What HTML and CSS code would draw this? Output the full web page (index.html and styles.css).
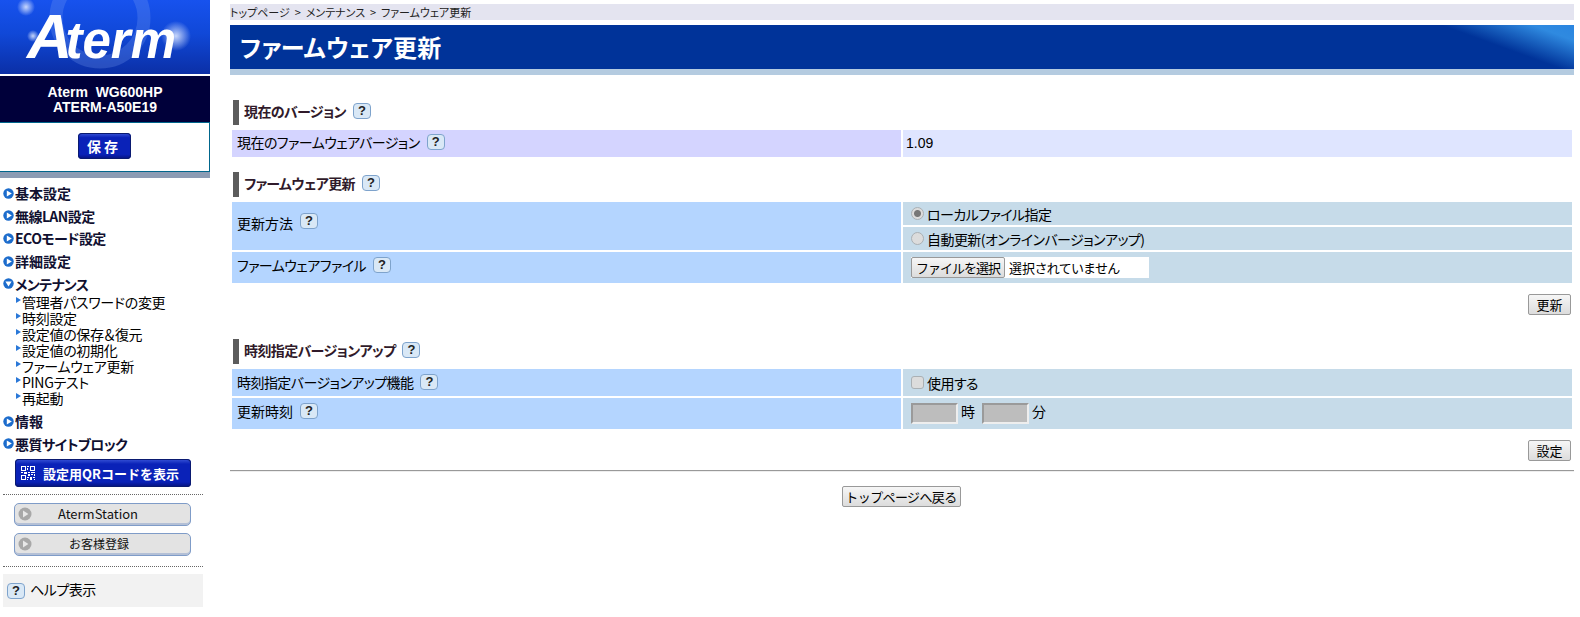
FILE: index.html
```html
<!DOCTYPE html>
<html lang="ja">
<head>
<meta charset="utf-8">
<title>ファームウェア更新</title>
<link rel="stylesheet" href="styles.css">
</head>
<body>
<svg class="sprite" width="0" height="0" aria-hidden="true">
  <symbol id="ic-right" viewBox="0 0 11 11"><circle cx="5.5" cy="5.5" r="5.2" fill="#1c6ccc"/><path d="M3.8 2.4 8.8 5.5 3.8 8.6Z" fill="#fff"/></symbol>
  <symbol id="ic-down" viewBox="0 0 11 11"><circle cx="5.5" cy="5.5" r="5.2" fill="#1c6ccc"/><path d="M2.4 3.6 8.6 3.6 5.5 8.6Z" fill="#fff"/></symbol>
  <symbol id="ic-sub" viewBox="0 0 5 6"><path d="M0 0 5 3 0 6Z" fill="#2a78d8"/></symbol>
  <symbol id="ic-grey" viewBox="0 0 14 14"><circle cx="7" cy="7" r="6.5" fill="#a8a8a8"/><path d="M5 3.6 10.4 7 5 10.4Z" fill="#e8e8e8"/></symbol>
</svg>
<div class="page">
  <aside class="side">
    <div class="logo">
      <svg class="logo-art" viewBox="0 0 210 74" aria-hidden="true">
        <defs>
          <radialGradient id="glow"><stop offset="0" stop-color="#dbe6ff" stop-opacity=".9"/><stop offset="1" stop-color="#dbe6ff" stop-opacity="0"/></radialGradient>
        </defs>
        <circle cx="100" cy="18" r="44" fill="none" stroke="#7ea4f2" stroke-opacity=".25" stroke-width="13"/>
        <circle cx="26" cy="7" r="9" fill="url(#glow)"/>
        <circle cx="33" cy="36" r="6" fill="url(#glow)"/>
        <circle cx="176" cy="36" r="15" fill="url(#glow)"/>
      </svg>
      <div class="logo-text"><span class="logo-a">A</span>term</div>
    </div>
    <div class="model"><div>Aterm&nbsp; WG600HP</div><div>ATERM-A50E19</div></div>
    <div class="save-box"><button class="btn-blue btn-save" type="button">保存</button></div>
    <div class="side-rule"></div>
    <nav class="menu">
      <a class="m1 m1-k"><svg class="ic"><use href="#ic-right"/></svg>基本設定</a>
      <a class="m1"><svg class="ic"><use href="#ic-right"/></svg>無線LAN設定</a>
      <a class="m1"><svg class="ic"><use href="#ic-right"/></svg>ECOモード設定</a>
      <a class="m1 m1-k"><svg class="ic"><use href="#ic-right"/></svg>詳細設定</a>
      <a class="m1"><svg class="ic"><use href="#ic-down"/></svg>メンテナンス</a>
      <div class="sub">
        <a class="m2"><svg class="ic-s"><use href="#ic-sub"/></svg>管理者パスワードの変更</a>
        <a class="m2"><svg class="ic-s"><use href="#ic-sub"/></svg>時刻設定</a>
        <a class="m2"><svg class="ic-s"><use href="#ic-sub"/></svg>設定値の保存＆復元</a>
        <a class="m2"><svg class="ic-s"><use href="#ic-sub"/></svg>設定値の初期化</a>
        <a class="m2"><svg class="ic-s"><use href="#ic-sub"/></svg>ファームウェア更新</a>
        <a class="m2"><svg class="ic-s"><use href="#ic-sub"/></svg>PINGテスト</a>
        <a class="m2"><svg class="ic-s"><use href="#ic-sub"/></svg>再起動</a>
      </div>
      <a class="m1 m1-k"><svg class="ic"><use href="#ic-right"/></svg>情報</a>
      <a class="m1"><svg class="ic"><use href="#ic-right"/></svg>悪質サイトブロック</a>
    </nav>
    <button class="btn-blue btn-qr" type="button">
      <svg class="qr" viewBox="0 0 14 14" aria-hidden="true"><path fill="#fff" d="M0 0h5v5H0zM1 1v3h3V1zM9 0h5v5H9zM10 1v3h3V1zM0 9h5v5H0zM1 10v3h3v-3zM6 0h2v1H6zM6 2h1v2H6zM0 6h2v1H0zM3 6h3v2H3zM7 6h2v1H7zM10 6h4v1h-4zM7 8h2v2H7zM10 8h2v1h-2zM13 8h1v2h-1zM6 11h2v1H6zM9 11h2v3H9zM12 11h2v1h-2zM13 13h1v1h-1zM6 13h1v1H6z"/></svg>
      <span>設定用QRコードを表示</span>
    </button>
    <div class="dots"></div>
    <button class="btn-grey" type="button"><svg class="ic-g"><use href="#ic-grey"/></svg><span>AtermStation</span></button>
    <button class="btn-grey btn-grey-jp" type="button"><svg class="ic-g"><use href="#ic-grey"/></svg><span>お客様登録</span></button>
    <div class="dots dots-2"></div>
    <div class="help-box"><span class="q">?</span>ヘルプ表示</div>
  </aside>

  <main class="main">
    <div class="crumb">トップページ &nbsp;&gt;&nbsp; メンテナンス &nbsp;&gt;&nbsp; ファームウェア更新</div>
    <h1 class="title">ファームウェア更新</h1>

    <section class="sec sec-1">
      <h2 class="head">現在のバージョン<span class="q">?</span></h2>
      <div class="row row-v">
        <div class="lc lc-v">現在のファームウェアバージョン<span class="q">?</span></div>
        <div class="rc rc-v">1.09</div>
      </div>
    </section>

    <section class="sec sec-2">
      <h2 class="head">ファームウェア更新<span class="q">?</span></h2>
      <div class="row">
        <div class="lc lc-tall lc-k">更新方法<span class="q">?</span></div>
        <div class="rstack">
          <label class="rc rc-s"><input type="radio" name="m" checked disabled>ローカルファイル指定</label>
          <label class="rc rc-s"><input type="radio" name="m" disabled>自動更新(オンラインバージョンアップ)</label>
        </div>
      </div>
      <div class="row">
        <div class="lc">ファームウェアファイル<span class="q">?</span></div>
        <div class="rc"><div class="file"><button class="btn btn-file" type="button">ファイルを選択</button><span class="file-t">選択されていません</span></div></div>
      </div>
      <div class="actions"><button class="btn btn-sm" type="button">更新</button></div>
    </section>

    <section class="sec sec-3">
      <h2 class="head">時刻指定バージョンアップ<span class="q">?</span></h2>
      <div class="row row-h27">
        <div class="lc">時刻指定バージョンアップ機能<span class="q">?</span></div>
        <label class="rc"><input type="checkbox" disabled>使用する</label>
      </div>
      <div class="row">
        <div class="lc lc-k">更新時刻<span class="q">?</span></div>
        <div class="rc"><span class="tbox"></span><span class="unit">時</span><span class="tbox"></span><span class="unit">分</span></div>
      </div>
      <div class="actions"><button class="btn btn-sm" type="button">設定</button></div>
    </section>

    <hr class="rule">
    <div class="back"><button class="btn btn-back" type="button">トップページへ戻る</button></div>
  </main>
</div>
</body>
</html>
```

FILE: styles.css
```css
* { box-sizing: border-box; }
html, body { margin: 0; padding: 0; background: #fff; }
body {
  font-family: "Noto Sans CJK JP", "Liberation Sans", sans-serif;
  font-size: 14px;
  color: #000;
  font-feature-settings: "palt";
  height: 617px;
  overflow: hidden;
}
.sprite { position: absolute; }
.page { display: flex; align-items: flex-start; }

/* sidebar */
.side { width: 210px; flex: none; }
.logo {
  position: relative;
  height: 74px;
  overflow: hidden;
  background: linear-gradient(#1752ee 0%, #1048d8 45%, #0b2fa6 100%);
}
.logo-art { position: absolute; inset: 0; width: 210px; height: 74px; }
.logo-text {
  position: absolute;
  left: 27px;
  top: 1px;
  font: italic bold 51px/70px "Liberation Sans", sans-serif;
  color: #fff;
  white-space: nowrap;
}
.logo-a { font-size: 63px; letter-spacing: -7px; }
.model {
  margin-top: 2px;
  height: 46px;
  padding-top: 9px;
  background: #00003a;
  color: #fff;
  text-align: center;
  font: bold 14px/15px "Liberation Sans", sans-serif;
}
.save-box {
  height: 50px;
  border: solid #00668c;
  border-width: 1px 1px 1px 0;
  display: flex;
  align-items: center;
  justify-content: center;
  padding: 0 1px 2px 0;
}
.btn-blue {
  border: 0;
  color: #fff;
  font-family: inherit;
  font-weight: bold;
  border-radius: 4px;
  background: linear-gradient(#3a55d8 0, #0a22b8 18%, #0a22b8 82%, #06127a 100%);
  box-shadow: 0 0 0 1px #0a1a70 inset;
}
.btn-save { width: 53px; height: 26px; font-size: 14px; letter-spacing: 3px; padding: 0; }
.side-rule { height: 6px; background: #8c9cb4; }
.menu { display: flex; flex-direction: column; padding-top: 4px; }
.m1 {
  display: flex;
  align-items: center;
  height: 22.6px;
  padding-left: 3px;
  font-weight: bold;
  font-size: 14px;
  letter-spacing: -.55px;
  color: #101030;
}
.m1-k { letter-spacing: 0; }
.ic { width: 11px; height: 11px; margin-right: 1px; flex: none; }
.sub { display: flex; flex-direction: column; margin-top: -1px; padding-bottom: 4px; }
.m2 { display: flex; align-items: center; height: 16px; padding-left: 16px; font-size: 14px; line-height: 16px; letter-spacing: -.3px; }
.ic-s { width: 5px; height: 6px; margin-right: 1px; margin-top: -3px; flex: none; }
.btn-qr {
  display: flex;
  align-items: center;
  margin: 4px 0 0 15px;
  width: 176px;
  height: 28px;
  padding: 0 0 0 6px;
  font-size: 13px;
}
.qr { width: 14px; height: 14px; margin-right: 8px; flex: none; }
.dots { margin: 7px 7px 8px 3px; border-top: 1px dotted #666; }
.dots-2 { margin-top: 10px; margin-bottom: 7px; }
.btn-grey {
  display: flex;
  align-items: center;
  width: 177px;
  height: 23px;
  margin: 0 0 7px 14px;
  padding: 0 0 2px 3px;
  border: 1px solid #7f9cc8;
  border-radius: 5px;
  background: #e3e3e3;
  box-shadow: 0 -2px 0 #b4c0d6 inset;
  font: 13px "Noto Sans CJK JP", sans-serif;
  color: #111;
}
.btn-grey span { flex: 1; text-align: center; padding-right: 26px; }
.btn-grey-jp span { font-size: 12px; padding-right: 24px; }
.ic-g { width: 14px; height: 14px; flex: none; }
.help-box {
  display: flex;
  align-items: center;
  height: 33px;
  margin: 0 7px 0 3px;
  padding: 0 0 3px 4px;
  background: #f2f2f2;
  letter-spacing: -.5px;
}
.help-box .q { margin: 3px 5px 0 0; }

/* help badge */
.q {
  display: inline-block;
  flex: none;
  width: 18px;
  height: 16px;
  margin-left: 7px;
  border: 1px solid #7ea3cc;
  border-radius: 4px;
  background: #d9e8f6;
  color: #222;
  font: bold 13px/14px "Liberation Sans", sans-serif;
  letter-spacing: 0;
  text-align: center;
  vertical-align: middle;
}

/* main column */
.main { width: 1344px; margin-left: 20px; padding-top: 4px; }
.crumb {
  height: 16px;
  background: #e4e4f0;
  font-size: 11px;
  line-height: 16px;
  color: #222;
  white-space: nowrap;
}
.title {
  margin: 5px 0 0;
  height: 50px;
  padding-left: 10px;
  border-bottom: 6px solid #b4cbe0;
  background:
    linear-gradient(20deg, #003399 50%, #2f8ae0 84%, #2a85e0 100%) no-repeat right top / 145px 44px,
    #003399;
  color: #fff;
  font-size: 24px;
  letter-spacing: .2px;
  line-height: 44px;
  font-weight: bold;
}
.sec { padding-left: 2px; padding-right: 2px; }
.sec-1 { margin-top: 25px; }
.sec-2 { margin-top: 15px; }
.sec-3 { margin-top: 24px; }
.head {
  display: flex;
  align-items: center;
  height: 25px;
  margin: 0 0 5px 1px;
  padding: 0 0 3px 5px;
  border-left: 6px solid #5c5c5c;
  font-size: 14px;
  font-weight: bold;
  letter-spacing: -.6px;
  color: #301a2a;
}
.row { display: grid; grid-template-columns: 669px 669px; column-gap: 2px; margin-bottom: 2px; }
.row-v { margin-bottom: 0; }
.lc, .rc { display: flex; align-items: center; min-height: 27px; letter-spacing: -.55px; }
.lc { background: #b4d5ff; padding-left: 5px; padding-bottom: 6px; min-height: 31px; }
.lc-k { letter-spacing: 0; }
.row-h27 .lc { min-height: 27px; padding-bottom: 2px; }
.row-h27 .rc { min-height: 27px; }
.lc-v { background: #d4d4ff; padding-bottom: 3px; min-height: 27px; }
.lc-tall { align-items: flex-start; padding-top: 11px; }
.rc { background: #c6dbe9; padding-left: 8px; font-size: 14px; }
.rc-v { background: #dfe5ff; font: 14px "Liberation Sans", sans-serif; letter-spacing: 0; padding: 0 0 2px 3px; }
.rstack { display: grid; grid-template-rows: 23px 23px; row-gap: 2px; }
.rc-s { min-height: 23px; }
input[type="radio"], input[type="checkbox"] {
  appearance: none;
  margin: 0 3px 0 0;
  width: 13px;
  height: 13px;
  flex: none;
  border: 1px solid #aab0b4;
  background: #dcdcdc;
}
input[type="radio"] { border-radius: 50%; }
input[type="radio"]:checked { background: radial-gradient(circle, #777 0 3px, #dcdcdc 4px); }
input[type="checkbox"] { border-radius: 3px; }
.file { display: flex; align-items: center; width: 238px; height: 21px; background: #fff; }
.btn {
  height: 21px;
  padding: 0 7px;
  border: 1px solid #999;
  border-radius: 2px;
  background: linear-gradient(#f6f6f6, #dcdcdc);
  font-family: inherit;
  font-size: 13px;
  line-height: 19px;
  color: #000;
}
.btn-file { width: 94px; padding: 0; flex: none; letter-spacing: -1px; }
.file-t { margin-left: 4px; font-size: 13px; letter-spacing: 0; }
.actions { display: flex; justify-content: flex-end; margin-top: 11px; padding-right: 1px; }
.btn-sm { width: 43px; padding: 0; }
.tbox {
  width: 47px;
  height: 21px;
  background: #bdbdbd;
  border: 2px solid;
  border-color: #9a9a9a #eee #eee #9a9a9a;
}
.unit { margin: 0 7px 5px 3px; letter-spacing: 0; }
.rule { margin: 9px 0 0; height: 2px; border: 0; border-top: 1px solid #999; border-bottom: 1px solid #eee; }
.back { display: flex; justify-content: center; margin-top: 14px; padding-right: 2px; }
.btn-back { width: 119px; padding: 0; letter-spacing: -.6px; }
```
